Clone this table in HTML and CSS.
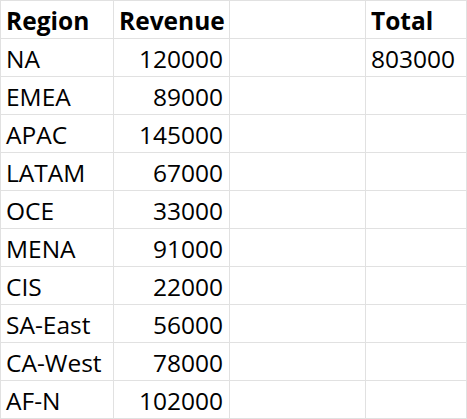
FILE: index.html
```html
<!DOCTYPE html>
<html>
<head>
<meta charset="utf-8">
<link rel="stylesheet" href="styles.css">
</head>
<body>
<div class="sheet">
  <div class="cell head">Region</div><div class="cell head">Revenue</div><div class="cell"></div><div class="cell head">Total</div>
  <div class="cell">NA</div><div class="cell num">120000</div><div class="cell"></div><div class="cell">803000</div>
  <div class="cell">EMEA</div><div class="cell num">89000</div><div class="cell"></div><div class="cell"></div>
  <div class="cell">APAC</div><div class="cell num">145000</div><div class="cell"></div><div class="cell"></div>
  <div class="cell">LATAM</div><div class="cell num">67000</div><div class="cell"></div><div class="cell"></div>
  <div class="cell">OCE</div><div class="cell num">33000</div><div class="cell"></div><div class="cell"></div>
  <div class="cell">MENA</div><div class="cell num">91000</div><div class="cell"></div><div class="cell"></div>
  <div class="cell">CIS</div><div class="cell num">22000</div><div class="cell"></div><div class="cell"></div>
  <div class="cell">SA-East</div><div class="cell num">56000</div><div class="cell"></div><div class="cell"></div>
  <div class="cell">CA-West</div><div class="cell num">78000</div><div class="cell"></div><div class="cell"></div>
  <div class="cell">AF-N</div><div class="cell num">102000</div><div class="cell"></div><div class="cell"></div>
</div>
</body>
</html>
```

FILE: styles.css
```css
html, body {
  margin: 0;
  padding: 0;
  background: #ffffff;
}
.sheet {
  display: grid;
  grid-template-columns: 112px 115px 135px 100px;
  grid-auto-rows: 37px;
  gap: 1px;
  padding: 1px;
  background: #e1e1e1;
  width: max-content;
  font-family: "Open Sans", sans-serif;
  font-size: 24.5px;
  font-weight: 500;
  color: #000;
}
.cell {
  background: #fff;
  display: flex;
  align-items: flex-end;
  justify-content: flex-start;
  padding: 0 6px 5px 5px;
  line-height: 24px;
  white-space: nowrap;
}
.head {
  font-weight: 700;
}
.num {
  justify-content: flex-end;
}
```
